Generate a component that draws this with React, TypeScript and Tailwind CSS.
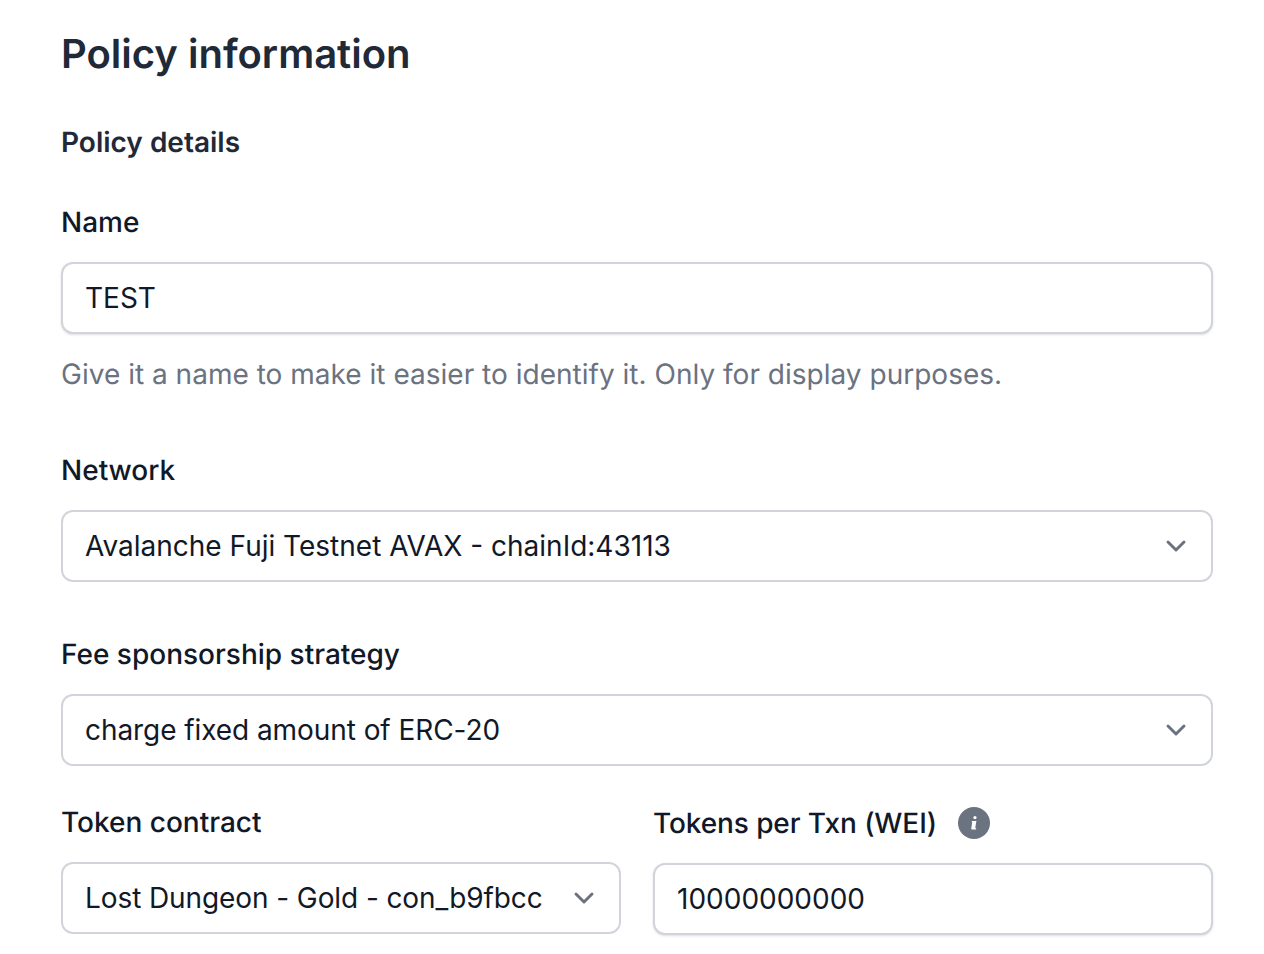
import clsx from "clsx";

function Chevron() {
  return (
    <svg viewBox="0 0 20 20" fill="none" className="w-[40px] h-[40px] shrink-0 text-[#6b7280]">
      <path d="M6 8l4 4 4-4" stroke="currentColor" strokeWidth="1.5" strokeLinecap="round" strokeLinejoin="round" />
    </svg>
  );
}

function Select({ value, textClass }: { value: string; textClass?: string }) {
  return (
    <button className="w-full h-[72px] bg-white border-2 border-[#d1d5db] rounded-[12px] pl-[22px] pr-[15px] flex justify-between items-center text-[28px] text-[#111827] text-left">
      <span className={clsx("truncate", textClass)}>{value}</span>
      <Chevron />
    </button>
  );
}

function TextInput({ value }: { value: string }) {
  return (
    <input
      type="text"
      readOnly
      value={value}
      className="block w-full h-[72px] bg-white border-2 border-[#d1d5db] rounded-[12px] px-[22px] text-[28px] text-[#111827] shadow-sm outline-none"
    />
  );
}

export default function App() {
  return (
    <main className="w-[1264px] h-[954px] overflow-hidden bg-white pl-[61px] pr-[51px] pt-[26px] font-['Inter',sans-serif] [text-rendering:geometricPrecision] antialiased">
      <h1 className="text-[40px] leading-[56px] font-semibold text-[#1f2937]">Policy information</h1>
      <h2 className="mt-[40px] text-[28px] leading-[40px] font-semibold text-[#1f2937]">Policy details</h2>

      <label className="block mt-[40px] text-[28px] leading-[40px] font-medium text-[#111827]">Name</label>
      <div className="mt-[20px]">
        <TextInput value="TEST" />
      </div>
      <p className="mt-[20px] text-[28px] leading-[40px] tracking-[0.014px] text-[#6b7280]">
        Give it a name to make it easier to identify it. Only for display purposes.
      </p>

      <label className="block mt-[56px] text-[28px] leading-[40px] font-medium text-[#111827]">Network</label>
      <div className="mt-[20px]">
        <Select value="Avalanche Fuji Testnet AVAX - chainId:43113" />
      </div>

      <label className="block mt-[52px] text-[28px] leading-[40px] font-medium text-[#111827]">Fee sponsorship strategy</label>
      <div className="mt-[20px]">
        <Select value="charge fixed amount of ERC-20" textClass="tracking-[-0.07px]" />
      </div>

      <div className="mt-[36px] grid grid-cols-2 gap-[32px]">
        <div>
          <label className="block text-[28px] leading-[40px] font-medium text-[#111827]">Token contract</label>
          <div className="mt-[20px]">
            <Select value="Lost Dungeon - Gold - con_b9fbcc" textClass="tracking-[-0.09px]" />
          </div>
        </div>
        <div>
          <div className="h-[41px] flex items-center gap-[21px]">
            <label className="text-[28px] leading-[40px] tracking-[-0.1px] font-medium text-[#111827]">Tokens per Txn (WEI)</label>
            <svg viewBox="0 0 20 20" className="w-[32px] h-[32px] text-[#6b7280]" fill="currentColor">
              <circle cx="10" cy="10" r="10" />
              <circle cx="10.6" cy="6.6" r="1" fill="#fff" />
              <path fill="#fff" d="M8.7 8.7h2.8l-.7 4.2c0 .25.15.35.6.35l-.1.8H9c-.55 0-.8-.35-.7-.8l.6-3.7h-.35Z" />
            </svg>
          </div>
          <div className="mt-[20px]">
            <TextInput value="10000000000" />
          </div>
        </div>
      </div>
    </main>
  );
}
